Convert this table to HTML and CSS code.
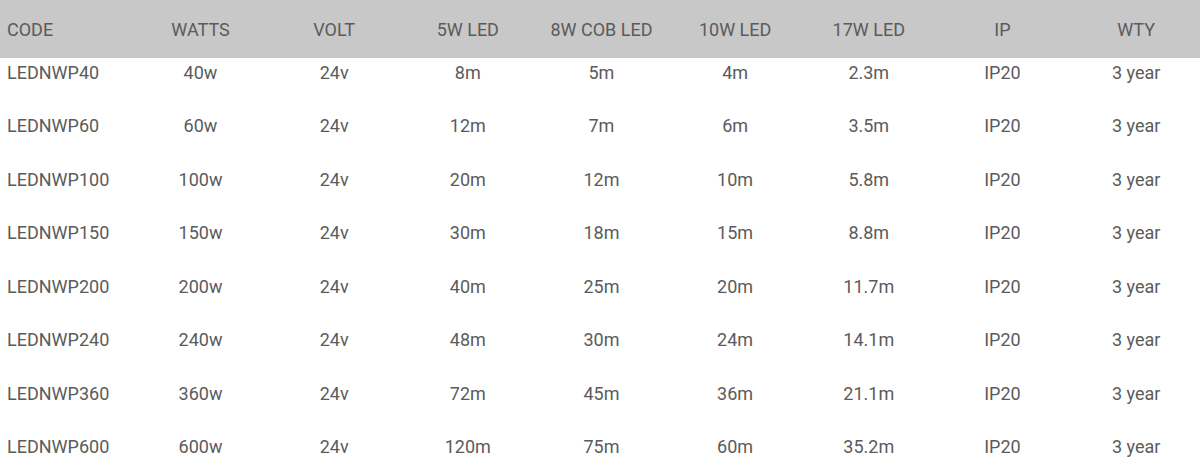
FILE: index.html
```html
<!DOCTYPE html>
<html lang="en">
<head>
<meta charset="utf-8">
<title>LED Drivers</title>
<link rel="stylesheet" href="styles.css">
</head>
<body>
<table class="spec">
  <thead>
    <tr>
      <th class="first">CODE</th><th>WATTS</th><th>VOLT</th><th>5W LED</th><th>8W COB LED</th><th>10W LED</th><th>17W LED</th><th>IP</th><th>WTY</th>
    </tr>
  </thead>
  <tbody>
    <tr><td class="first">LEDNWP40</td><td>40w</td><td>24v</td><td>8m</td><td>5m</td><td>4m</td><td>2.3m</td><td>IP20</td><td>3 year</td></tr>
    <tr><td class="first">LEDNWP60</td><td>60w</td><td>24v</td><td>12m</td><td>7m</td><td>6m</td><td>3.5m</td><td>IP20</td><td>3 year</td></tr>
    <tr><td class="first">LEDNWP100</td><td>100w</td><td>24v</td><td>20m</td><td>12m</td><td>10m</td><td>5.8m</td><td>IP20</td><td>3 year</td></tr>
    <tr><td class="first">LEDNWP150</td><td>150w</td><td>24v</td><td>30m</td><td>18m</td><td>15m</td><td>8.8m</td><td>IP20</td><td>3 year</td></tr>
    <tr><td class="first">LEDNWP200</td><td>200w</td><td>24v</td><td>40m</td><td>25m</td><td>20m</td><td>11.7m</td><td>IP20</td><td>3 year</td></tr>
    <tr><td class="first">LEDNWP240</td><td>240w</td><td>24v</td><td>48m</td><td>30m</td><td>24m</td><td>14.1m</td><td>IP20</td><td>3 year</td></tr>
    <tr><td class="first">LEDNWP360</td><td>360w</td><td>24v</td><td>72m</td><td>45m</td><td>36m</td><td>21.1m</td><td>IP20</td><td>3 year</td></tr>
    <tr><td class="first">LEDNWP600</td><td>600w</td><td>24v</td><td>120m</td><td>75m</td><td>60m</td><td>35.2m</td><td>IP20</td><td>3 year</td></tr>
  </tbody>
</table>
</body>
</html>
```
FILE: styles.css
```css
html, body {
  margin: 0;
  padding: 0;
  background: #ffffff;
  overflow: hidden;
}

.spec {
  width: 1203px;
  table-layout: fixed;
  border-collapse: collapse;
  font-family: Roboto, "Liberation Sans", sans-serif;
  font-size: 18px;
  color: #5b5b5b;
}

.spec th,
.spec td {
  padding: 0;
  text-align: center;
  font-weight: 400;
  line-height: 21px;
  white-space: nowrap;
}

.spec thead tr {
  background: #c8c8c8;
}

.spec th {
  height: 58px;
  vertical-align: middle;
}

.spec td {
  height: 53.43px;
  box-sizing: border-box;
  padding-top: 4px;
  vertical-align: top;
}

.spec .first {
  text-align: left;
  padding-left: 7px;
}
```
